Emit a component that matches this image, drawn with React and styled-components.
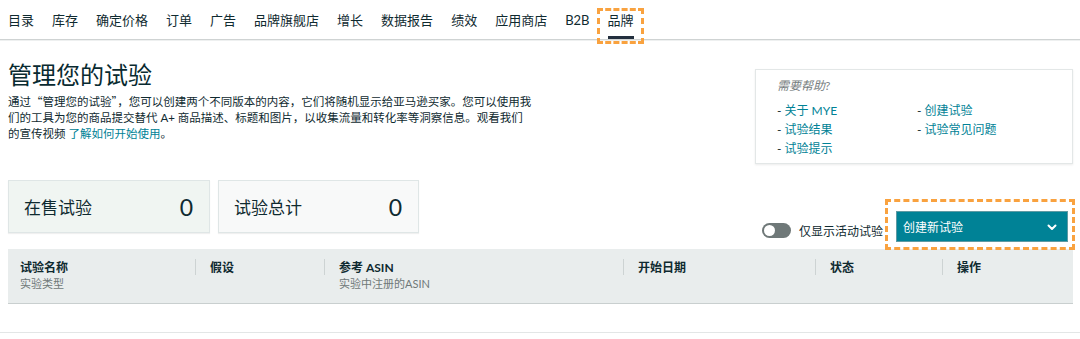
import React from "react";
import styled, { createGlobalStyle, css } from "styled-components";

const GlobalStyle = createGlobalStyle`
  html, body { margin: 0; padding: 0; background: #fff; }
  body {
    font-family: "Lato", "Noto Sans CJK SC", sans-serif;
    color: #0f2a30;
    -webkit-font-smoothing: antialiased;
  }
  * { box-sizing: border-box; }
`;

const ORANGE = "#f9a23f";
const TEXT = "#0f2a30";
const LINK = "#008296";

const Nav = styled.nav`
  display: flex;
  gap: 18px;
  height: 40px;
  padding-left: 8px;
  border-bottom: 1px solid #cfd3d3;
  box-shadow: 0 1px 0 #eef0f0;
`;

const NavItem = styled.a`
  position: relative;
  display: flex;
  align-items: center;
  height: 39px;
  font-size: 13px;
  color: ${TEXT};
  text-decoration: none;
  white-space: nowrap;
  ${(p) =>
    p.$active &&
    css`
      &::after {
        content: "";
        position: absolute;
        left: 0;
        right: 0;
        bottom: 0;
        height: 3px;
        background: #232f3e;
      }
    `}
`;

const Highlight = styled.span`
  position: absolute;
  border: 3px dashed ${ORANGE};
  pointer-events: none;
  top: ${(p) => p.$t}px;
  left: ${(p) => p.$l}px;
  right: ${(p) => p.$r}px;
  bottom: ${(p) => p.$b}px;
`;

const Main = styled.main`
  padding: 0 7px 0 8px;
`;

const TopSection = styled.section`
  display: flex;
  justify-content: space-between;
  align-items: flex-start;
  margin-top: 20px;
`;

const Intro = styled.div`
  width: 600px;
`;

const Title = styled.h1`
  margin: 0;
  font-size: 24px;
  line-height: 30px;
  font-weight: 400;
  color: #082a30;
`;

const Desc = styled.p`
  margin: 3px 0 0;
  font-size: 11.5px;
  line-height: 16px;
  color: ${TEXT};
`;

const Quote = styled.span`
  font-family: "Noto Sans CJK SC", sans-serif;
`;

const Link = styled.a`
  color: ${LINK};
  text-decoration: none;
`;

const HelpBox = styled.aside`
  width: 318px;
  flex-shrink: 0;
  margin-top: 9px;
  padding: 7px 10px 5px 21px;
  border: 1px solid #e3e7e7;
  box-shadow: 0 1px 2px rgba(0, 0, 0, 0.08);
  background: #fff;
`;

const HelpTitle = styled.div`
  font-size: 12px;
  line-height: 18px;
  font-style: italic;
  color: #767d7e;
`;

const HelpGrid = styled.ul`
  list-style: none;
  margin: 6px 0 0;
  padding: 0;
  display: grid;
  grid-template-columns: 140px 1fr;
  grid-auto-rows: 19px;
  font-size: 12px;
  line-height: 19px;
`;

const HelpItem = styled.li`
  color: ${TEXT};
  white-space: nowrap;
`;

const StatsRow = styled.section`
  display: flex;
  justify-content: space-between;
  align-items: flex-start;
  margin-top: 16px;
`;

const Cards = styled.div`
  display: flex;
  gap: 8px;
`;

const StatCard = styled.div`
  display: flex;
  align-items: center;
  justify-content: space-between;
  width: ${(p) => p.$w}px;
  height: 53px;
  padding: 0 16px 0 15px;
  border: 1px solid #dfe6e6;
  box-shadow: 0 1px 1px rgba(0, 0, 0, 0.06);
  background: ${(p) => (p.$active ? "#f0f5f2" : "#f8f9f9")};
`;

const StatLabel = styled.span`
  font-size: 17px;
  color: ${TEXT};
`;

const StatValue = styled.span`
  font-size: 23px;
  color: ${TEXT};
`;

const Controls = styled.div`
  display: flex;
  align-items: center;
  gap: 13px;
  margin-top: 31px;
  margin-right: 5px;
`;

const ToggleGroup = styled.label`
  display: flex;
  align-items: center;
  gap: 8px;
  margin-top: 7px;
  font-size: 12px;
  color: ${TEXT};
  white-space: nowrap;
`;

const Toggle = styled.span`
  position: relative;
  width: 29px;
  height: 15px;
  border-radius: 8px;
  background: #6f7878;
  &::after {
    content: "";
    position: absolute;
    left: 2px;
    top: 2px;
    width: 11px;
    height: 11px;
    border-radius: 50%;
    background: #fff;
  }
`;

const ButtonWrap = styled.div`
  position: relative;
`;

const CreateButton = styled.button`
  display: flex;
  align-items: center;
  justify-content: space-between;
  width: 172px;
  height: 31px;
  padding: 0 9px 0 6px;
  border: 1px solid #5f9aa3;
  background: #008296;
  color: #fff;
  font-family: inherit;
  font-size: 12px;
  cursor: pointer;
`;

const TableHead = styled.div`
  display: grid;
  grid-template-columns: 187px 129px 299px 192px 127px 1fr;
  height: 55px;
  margin-top: 7px;
  background: #e9eded;
  border-bottom: 1px solid #c9cfcf;
`;

const HeadCell = styled.div`
  position: relative;
  padding: 11px 0 0 ${(p) => (p.$first ? 12 : 15)}px;
  ${(p) =>
    !p.$first &&
    css`
      &::before {
        content: "";
        position: absolute;
        left: 0;
        top: 10px;
        height: 16px;
        width: 1px;
        background: #cdd3d3;
      }
    `}
`;

const HeadTitle = styled.div`
  font-size: 12px;
  line-height: 16px;
  font-weight: 700;
  color: #0f2a30;
`;

const HeadSub = styled.div`
  font-size: 11px;
  line-height: 16px;
  color: #6f7878;
`;

const Divider = styled.hr`
  margin: 28px 0 0;
  border: 0;
  border-top: 1px solid #e3e6e6;
`;

const navItems = [
  "目录",
  "库存",
  "确定价格",
  "订单",
  "广告",
  "品牌旗舰店",
  "增长",
  "数据报告",
  "绩效",
  "应用商店",
  "B2B",
  "品牌",
];

const columns = [
  { title: "试验名称", sub: "实验类型" },
  { title: "假设" },
  { title: "参考 ASIN", sub: "实验中注册的ASIN" },
  { title: "开始日期" },
  { title: "状态" },
  { title: "操作" },
];

const Chevron = () => (
  <svg width="12" height="12" viewBox="0 0 12 12" fill="none">
    <polyline
      points="2.5,4.5 6,8 9.5,4.5"
      stroke="#fff"
      strokeWidth="2"
      strokeLinecap="round"
      strokeLinejoin="round"
    />
  </svg>
);

export default function App() {
  return (
    <>
      <GlobalStyle />
      <Nav>
        {navItems.map((item) => {
          const active = item === "品牌";
          return (
            <NavItem key={item} $active={active}>
              {item}
              {active && <Highlight $t={8} $l={-11} $r={-10} $b={-5} />}
            </NavItem>
          );
        })}
      </Nav>
      <Main>
        <TopSection>
          <Intro>
            <Title>管理您的试验</Title>
            <Desc>
              通过<Quote>“</Quote>管理您的试验<Quote>”</Quote>，您可以创建两个不同版本的内容，它们将随机显示给亚马逊买家。您可以使用我
              <br />
              们的工具为您的商品提交替代 A+ 商品描述、标题和图片，以收集流量和转化率等洞察信息。观看我们
              <br />
              的宣传视频 <Link>了解如何开始使用</Link>。
            </Desc>
          </Intro>
          <HelpBox>
            <HelpTitle>需要帮助?</HelpTitle>
            <HelpGrid>
              <HelpItem>
                - <Link>关于 MYE</Link>
              </HelpItem>
              <HelpItem>
                - <Link>创建试验</Link>
              </HelpItem>
              <HelpItem>
                - <Link>试验结果</Link>
              </HelpItem>
              <HelpItem>
                - <Link>试验常见问题</Link>
              </HelpItem>
              <HelpItem>
                - <Link>试验提示</Link>
              </HelpItem>
            </HelpGrid>
          </HelpBox>
        </TopSection>

        <StatsRow>
          <Cards>
            <StatCard $active $w={202}>
              <StatLabel>在售试验</StatLabel>
              <StatValue>0</StatValue>
            </StatCard>
            <StatCard $w={201}>
              <StatLabel>试验总计</StatLabel>
              <StatValue>0</StatValue>
            </StatCard>
          </Cards>
          <Controls>
            <ToggleGroup>
              <Toggle />
              仅显示活动试验
            </ToggleGroup>
            <ButtonWrap>
              <CreateButton>
                创建新试验
                <Chevron />
              </CreateButton>
              <Highlight $t={-12} $l={-11} $r={-7} $b={-8} />
            </ButtonWrap>
          </Controls>
        </StatsRow>

        <TableHead>
          {columns.map((c, i) => (
            <HeadCell key={c.title} $first={i === 0}>
              <HeadTitle>{c.title}</HeadTitle>
              {c.sub && <HeadSub>{c.sub}</HeadSub>}
            </HeadCell>
          ))}
        </TableHead>
      </Main>
      <Divider />
    </>
  );
}
